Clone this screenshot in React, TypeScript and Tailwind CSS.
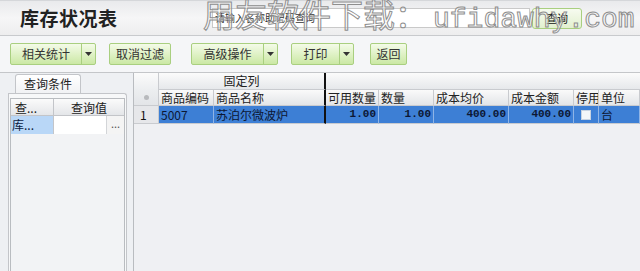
import React from 'react';

const cjk = "font-['Noto_Sans_CJK_SC','Noto_Sans',sans-serif]";
const mono = "font-['Liberation_Mono','Noto_Sans_CJK_SC',monospace]";

type Col = { label: string; value: string; align: 'left' | 'right' | 'center'; num?: boolean };

const columns: Col[] = [
  { label: '商品编码', value: '5007', align: 'left' },
  { label: '商品名称', value: '苏泊尔微波炉', align: 'left' },
  { label: '可用数量', value: '1.00', align: 'right', num: true },
  { label: '数量', value: '1.00', align: 'right', num: true },
  { label: '成本均价', value: '400.00', align: 'right', num: true },
  { label: '成本金额', value: '400.00', align: 'right', num: true },
  { label: '停用', value: '', align: 'center' },
  { label: '单位', value: '台', align: 'left' },
];

const ToolButton = ({ label, dropdown, width }: { label: string; dropdown?: boolean; width: string }) => (
  <div className="flex h-[22px] border border-[#a9cf80] rounded-[2px] bg-gradient-to-b from-[#f4fbe8] to-[#cbe8a4] text-[12px] text-[#333]">
    <div className={`${width} flex items-center justify-center`}>{label}</div>
    {dropdown && (
      <div className="w-[14px] flex items-center justify-center border-l border-[#a9cf80]">
        <svg width="7" height="4" viewBox="0 0 7 4">
          <path d="M0 0h7L3.5 4z" fill="#333" />
        </svg>
      </div>
    )}
  </div>
);

const App: React.FC = () => {
  return (
    <div className={`relative w-[640px] h-[271px] overflow-hidden bg-[#eef0f3] flex flex-col ${cjk}`}>
      {/* title bar */}
      <div className="h-[36px] shrink-0 flex items-center border-t border-[#d5d7da] border-b border-b-[#c8cacd] bg-gradient-to-b from-[#e9eaec] via-[#f6f6f7] to-[#ededee]">
        <div className="ml-[20px] w-[192px] text-[19px] font-bold text-[#222] tracking-[0.5px]">库存状况表</div>
        <div className="w-[318px] h-[20px] bg-white border border-[#c9c9c9] flex items-center pl-[2px] text-[10px] text-[#333] leading-[12px] whitespace-nowrap">
          请输入名称助记码查询
        </div>
        <div className="ml-[2px] w-[50px] h-[21px] flex items-center justify-center border border-[#a9cf80] rounded-[3px] bg-gradient-to-b from-[#f7fbf0] to-[#e2f0cf] text-[11px] text-[#111]">
          查询
        </div>
      </div>

      {/* toolbar */}
      <div className="h-[37px] shrink-0 flex items-center pl-[10px] border-b border-[#c4c6c9] bg-[#f5f6f8]">
        <ToolButton label="相关统计" dropdown width="w-[70px]" />
        <div className="w-[13px]" />
        <ToolButton label="取消过滤" width="w-[60px]" />
        <div className="w-[20px]" />
        <ToolButton label="高级操作" dropdown width="w-[71px]" />
        <div className="w-[13px]" />
        <ToolButton label="打印" dropdown width="w-[47px]" />
        <div className="w-[16px]" />
        <ToolButton label="返回" width="w-[35px]" />
      </div>

      {/* body */}
      <div className="flex-1 flex min-h-0">
        {/* left query panel */}
        <div className="w-[133px] shrink-0 flex flex-col pl-[8px] pr-[6px] pt-[1px]">
          <div className="ml-[7px] w-[66px] h-[19px] flex items-center justify-center border border-b-0 border-[#c3c5c9] rounded-t-[3px] bg-gradient-to-b from-white to-[#f1f2f4] text-[12px] text-[#222]">
            查询条件
          </div>
          <div className="flex-1 border border-[#c3c5c9] rounded-tr-[3px] bg-[#f7f8f9] pt-[4px] px-[1px] border-b-0">
            <div className="h-full border border-[#b9bcc0] border-b-0 bg-[#f2f3f5] flex flex-col">
              <div className="grid grid-cols-[43px_1fr] h-[17px] text-[12px] text-[#222] bg-gradient-to-b from-[#fbfbfb] to-[#e4e6e9] border-b border-[#c3c5c9]">
                <div className="flex items-center pl-[4px] border-r border-[#c3c5c9]">查...</div>
                <div className="flex items-center justify-center">查询值</div>
              </div>
              <div className="grid grid-cols-[43px_1fr_17px] h-[18px] text-[12px] border-b border-[#c3c5c9]">
                <div className="flex items-center pl-[1px] bg-[#b9d7f7] text-[#0a1a40] border-r border-[#c3c5c9]">库...</div>
                <div className="bg-white border-r border-[#d3d5d8]" />
                <div className="flex items-center justify-center bg-[#f4f4f4] text-[11px] text-[#555] leading-none pb-[4px]">...</div>
              </div>
            </div>
          </div>
        </div>

        {/* right grid */}
        <div className="flex-1 border-l border-[#b9bcc0] bg-[#eff0f3] relative">
          <div className="grid grid-cols-[25px_55px_112px_53px_55px_75px_65px_25px_1fr] text-[12px] text-[#222]">
            {/* group header row */}
            <div className="h-[17px] bg-gradient-to-b from-[#fbfbfb] to-[#eceef0] border-r border-[#c9cbcf]" />
            <div className="col-span-2 h-[17px] flex items-center justify-center bg-gradient-to-b from-[#fbfbfb] to-[#e6e8eb] border-b border-r-2 border-[#c9cbcf] border-r-[#111]">
              固定列
            </div>
            <div className="col-span-6 h-[17px] bg-gradient-to-b from-[#fbfbfb] to-[#e6e8eb] border-b border-[#c9cbcf]" />

            {/* column header row */}
            <div className="h-[16px] flex items-center justify-center bg-gradient-to-b from-[#eceef0] to-[#e3e5e8] border-r border-b border-[#c9cbcf]">
              <span className="w-[5px] h-[5px] rounded-full bg-[#b8babd]" />
            </div>
            {columns.map((c, i) => (
              <div
                key={c.label}
                className={`h-[16px] flex items-center pl-[2px] whitespace-nowrap overflow-hidden bg-gradient-to-b from-[#fafafa] to-[#e3e5e8] border-b border-[#c9cbcf] ${
                  i === 1 ? 'border-r-2 border-r-[#111]' : 'border-r'
                }`}
              >
                {c.label}
              </div>
            ))}

            {/* data row */}
            <div className="h-[18px] flex items-center pl-[6px] bg-[#e6e7ea] border-r border-b border-[#c9cbcf] text-[#111]">1</div>
            {columns.map((c, i) => (
              <div
                key={c.label + '-v'}
                className={`h-[18px] flex items-center px-[2px] whitespace-nowrap overflow-hidden bg-[#3d7fd5] text-[#0c1733] border-b border-[#c9cbcf] ${
                  i === 1 ? 'border-r-2 border-r-[#111]' : 'border-r border-r-[#8fb4e6]'
                } ${c.align === 'right' ? 'justify-end' : c.align === 'center' ? 'justify-center' : 'justify-start'} ${
                  c.num ? `${mono} text-[11px] font-bold` : ''
                }`}
              >
                {c.label === '停用' ? <span className="w-[10px] h-[10px] bg-[#f4f6f9] border border-[#c8d3e2]" /> : c.value}
              </div>
            ))}
          </div>
        </div>
      </div>

      {/* watermark */}
      <div className="absolute left-[203px] top-[-3px] pointer-events-none whitespace-nowrap flex items-baseline leading-none text-[rgba(255,255,255,0.35)] [-webkit-text-stroke:1px_#8e8e8e]">
        <span className={`${cjk} text-[32px]`}>用友软件下载：</span>
        <span className={`${mono} text-[28px] ml-[6px]`}>ufidawhy.com</span>
      </div>
    </div>
  );
};

export default App;
